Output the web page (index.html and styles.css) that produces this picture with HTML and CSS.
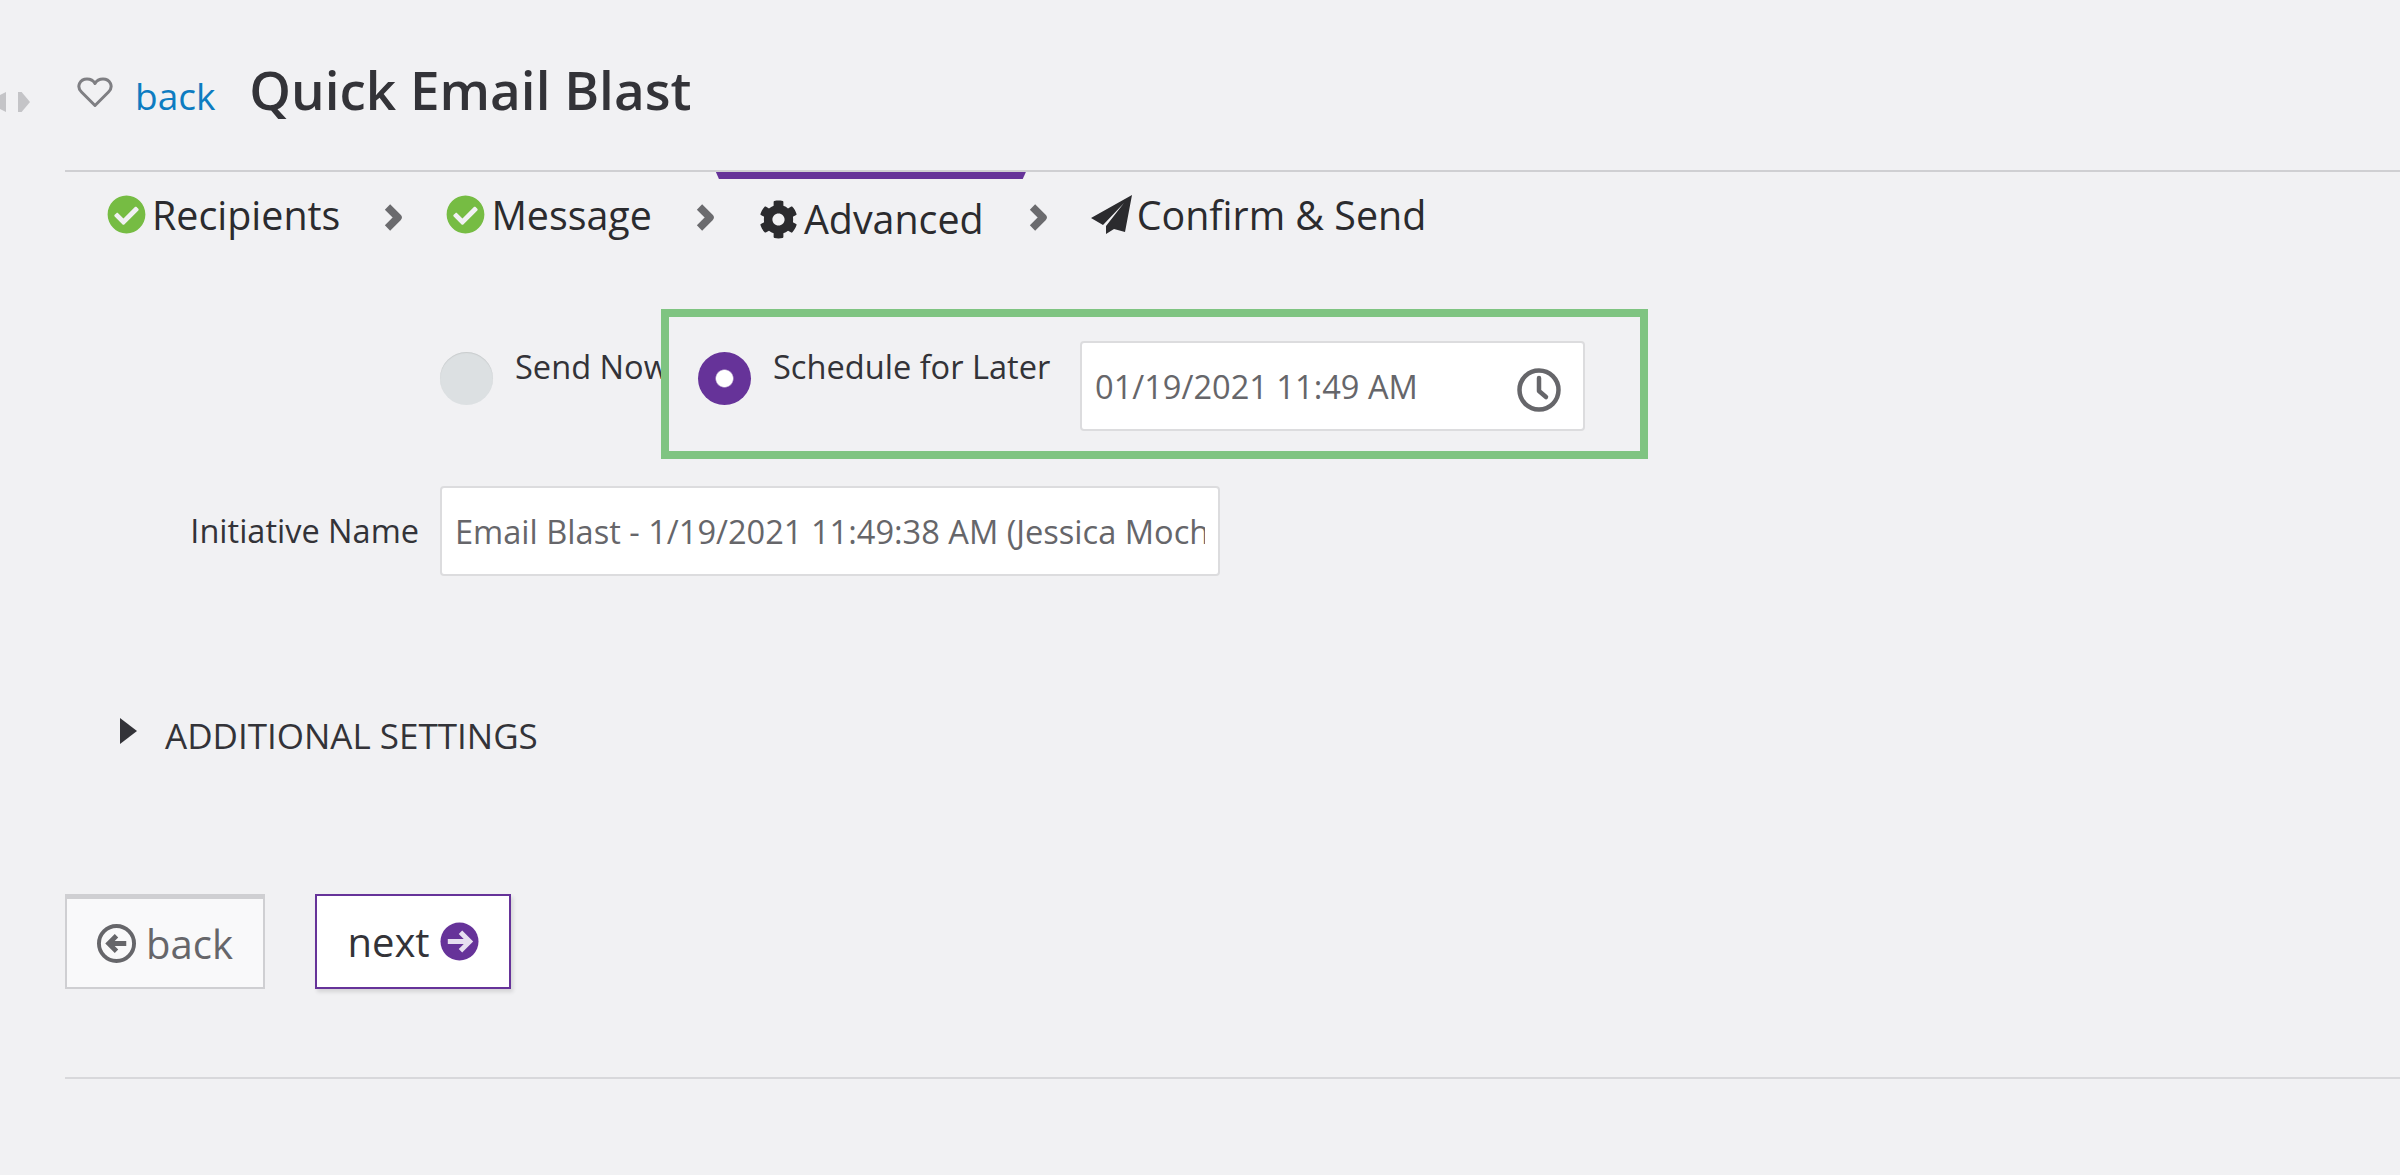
FILE: index.html
```html
<!DOCTYPE html>
<html lang="en">
<head>
<meta charset="utf-8">
<title>Quick Email Blast</title>
<link rel="stylesheet" href="styles.css">
</head>
<body>
<div class="collapse-handle" aria-hidden="true"><span class="tri tri-left"></span><span class="tri tri-right"></span></div>
<main class="page">
  <header class="head">
    <svg class="heart" viewBox="0 0 36 31"><path d="M18 28.500 4.500 15C-1 9.500 3 2 10 2c3.500 0 6.500 1.800 8 4.500C19.500 3.800 22.500 2 26 2c7 0 11 7.500 5.500 13Z"/></svg>
    <a class="back-link" href="#">back</a>
    <h1 class="title">Quick Email Blast</h1>
  </header>

  <nav class="steps">
    <div class="step step-first">
      <svg class="ico-check" viewBox="0 0 512 512"><path d="M504 256c0 136.967-111.033 248-248 248S8 392.967 8 256 119.033 8 256 8s248 111.033 248 248zM227.314 387.314l184-184c6.248-6.248 6.248-16.379 0-22.627l-22.627-22.627c-6.248-6.249-16.379-6.249-22.628 0L216 308.118l-70.059-70.059c-6.248-6.248-16.379-6.248-22.628 0l-22.627 22.627c-6.248 6.248-6.248 16.379 0 22.627l104 104c6.249 6.249 16.379 6.249 22.628.001z"/></svg>
      <span>Recipients</span>
    </div>
    <svg class="chev chev-1" viewBox="0 0 20 29"><path d="M4.500 4 15 14.500 4.500 25"/></svg>
    <div class="step">
      <svg class="ico-check" viewBox="0 0 512 512"><path d="M504 256c0 136.967-111.033 248-248 248S8 392.967 8 256 119.033 8 256 8s248 111.033 248 248zM227.314 387.314l184-184c6.248-6.248 6.248-16.379 0-22.627l-22.627-22.627c-6.248-6.249-16.379-6.249-22.628 0L216 308.118l-70.059-70.059c-6.248-6.248-16.379-6.248-22.628 0l-22.627 22.627c-6.248 6.248-6.248 16.379 0 22.627l104 104c6.249 6.249 16.379 6.249 22.628.001z"/></svg>
      <span>Message</span>
    </div>
    <svg class="chev chev-2" viewBox="0 0 20 29"><path d="M4.500 4 15 14.500 4.500 25"/></svg>
    <div class="step step-active">
      <svg class="ico-gear" viewBox="0 0 512 512"><path d="M487.4 315.7l-42.600-24.600c4.300-23.200 4.300-47 0-70.200l42.600-24.600c4.900-2.800 7.100-8.600 5.500-14-11.100-35.600-30-67.800-54.700-94.600-3.800-4.100-10-5.100-14.800-2.300L380.800 110c-17.900-15.400-38.500-27.300-60.800-35.100V25.800c0-5.600-3.900-10.500-9.400-11.700-36.700-8.200-74.300-7.800-109.200 0-5.500 1.200-9.400 6.100-9.400 11.700V75c-22.200 7.900-42.800 19.800-60.800 35.100L88.700 85.500c-4.900-2.800-11-1.900-14.800 2.300-24.700 26.700-43.600 58.900-54.700 94.600-1.700 5.400.6 11.200 5.500 14L67.300 221c-4.300 23.200-4.300 47 0 70.200l-42.600 24.600c-4.900 2.800-7.100 8.600-5.500 14 11.100 35.600 30 67.800 54.700 94.600 3.800 4.100 10 5.100 14.800 2.300l42.600-24.600c17.900 15.400 38.500 27.300 60.800 35.100v49.200c0 5.600 3.900 10.500 9.400 11.700 36.700 8.200 74.300 7.800 109.200 0 5.500-1.200 9.400-6.100 9.400-11.700v-49.200c22.200-7.900 42.800-19.800 60.800-35.100l42.600 24.600c4.900 2.800 11 1.900 14.800-2.300 24.700-26.700 43.600-58.900 54.700-94.600 1.500-5.500-.7-11.300-5.600-14.100zM256 336c-44.100 0-80-35.900-80-80s35.900-80 80-80 80 35.900 80 80-35.900 80-80 80z"/></svg>
      <span>Advanced</span>
    </div>
    <svg class="chev chev-3" viewBox="0 0 20 29"><path d="M4.500 4 15 14.500 4.500 25"/></svg>
    <div class="step step-send">
      <svg class="ico-plane" viewBox="0 0 41 39"><path d="M41 0 0 23 12 30 33 8 15 31 15 39 23 34 34 37Z"/></svg>
      <span>Confirm &amp; Send</span>
    </div>
  </nav>

  <form class="form">
    <div class="send-row">
      <span class="radio radio-off"></span>
      <span class="radio-label send-now">Send Now</span>
      <div class="highlight">
        <span class="radio radio-on"></span>
        <span class="radio-label schedule">Schedule for Later</span>
        <div class="field date-field">
          <input class="field-input" type="text" readonly value="01/19/2021 11:49 AM">
          <svg class="ico-clock" viewBox="0 0 44 44"><circle cx="22" cy="22" r="19.500"/><path d="M22 10v13l7 6"/></svg>
        </div>
      </div>
    </div>

    <div class="name-row">
      <label class="name-label" for="initiative">Initiative Name</label>
      <div class="field name-field">
        <input class="field-input" id="initiative" type="text" readonly value="Email Blast - 1/19/2021 11:49:38 AM (Jessica Mochan)">
      </div>
    </div>

    <div class="additional">
      <svg class="ico-tri" viewBox="0 0 17 28"><path d="M0 1 17 14 0 27Z"/></svg>
      <span>ADDITIONAL SETTINGS</span>
    </div>

    <div class="actions">
      <button type="button" class="btn btn-back">
        <svg class="ico-btn" viewBox="0 0 40 40"><circle class="ring" cx="20" cy="20" r="18"/><path class="arrow" d="M30 20H14M20 12l-8 8 8 8"/></svg>
        <span>back</span>
      </button>
      <button type="button" class="btn btn-next">
        <span>next</span>
        <svg class="ico-btn" viewBox="0 0 40 40"><circle class="disc" cx="20" cy="20" r="19.500"/><path class="arrow" d="M8 20h22M21 10.500l9.500 9.500-9.500 9.500"/></svg>
      </button>
    </div>
  </form>
  <div class="bottom-rule"></div>
</main>
</body>
</html>
```
FILE: styles.css
```css
* { box-sizing: border-box; }
html, body { margin: 0; height: 100%; }
body {
  background: #f1f1f3;
  color: #333338;
  font-family: "Open Sans", "Liberation Sans", sans-serif;
  overflow: hidden;
  position: relative;
}

.collapse-handle {
  position: absolute;
  left: 0;
  top: 92px;
  display: flex;
  gap: 12px;
}
.tri { display: block; height: 20px; background: #c4c4c7; }
.tri-left { width: 6px; clip-path: polygon(0 15%, 100% 0, 100% 100%, 0 85%); }
.tri-right { width: 12px; clip-path: polygon(0 0, 30% 0, 100% 50%, 30% 100%, 0 100%); }

.page { padding-left: 65px; }

.head {
  height: 172px;
  border-bottom: 2px solid #cfcfd2;
  display: flex;
  align-items: flex-start;
  padding-left: 12px;
}
.heart { width: 36px; height: 31px; margin-top: 77px; fill: none; stroke: #7f7f83; stroke-width: 3; stroke-linejoin: round; }
.back-link { color: #0d7cc1; font-size: 37px; line-height: 48px; margin: 72px 0 0 22px; text-decoration: none; }
.title { font-size: 53px; font-weight: 600; line-height: 70px; margin: 55px 0 0 34px; color: #333338; }

.steps {
  display: flex;
  align-items: flex-start;
  padding-left: 42px;
  height: 137px;
  color: #2b2b2e;
  font-size: 39.4px;
  line-height: 54px;
}
.step { display: flex; align-items: flex-start; padding-top: 16px; position: relative; }
.step span { margin-left: 6px; }
.step-send span { margin-left: 5px; }
.ico-check { width: 39px; height: 39px; margin-top: 7px; fill: #76bc43; }
.chev { width: 20px; height: 29px; margin-top: 31px; flex: none; fill: none; stroke: #6b6b6e; stroke-width: 7.500; stroke-linejoin: round; }
.chev-1 { margin-left: 43px; margin-right: 43px; }
.chev-2 { margin-left: 43px; margin-right: 44px; }
.chev-3 { margin-left: 44px; margin-right: 43px; }
.step-active { padding-top: 20px; }
.step-active::before {
  content: "";
  position: absolute;
  left: -43px;
  top: 0;
  width: 310px;
  height: 7px;
  background: #663399;
  clip-path: polygon(0 0, 100% 0, 99% 100%, 1% 100%);
}
.ico-gear { width: 39px; height: 39px; margin-top: 8px; fill: #2b2b2e; }
.ico-plane { width: 41px; height: 39px; margin-top: 7px; fill: #2b2b2e; }

.form { display: block; }
.send-row { display: flex; align-items: flex-start; padding-left: 375px; }
.radio { display: block; width: 53px; height: 53px; border-radius: 50%; flex: none; margin-top: 43px; }
.radio-off { background: #dce0e2; box-shadow: inset 0 1px 1px #c9cccd; }
.radio-on { background: radial-gradient(circle, #fff 0 8px, #663399 9.500px); margin-top: 35px; }
.radio-label { font-size: 32.600px; line-height: 46px; flex: none; white-space: nowrap; }
.send-now { width: 146px; margin: 35px 0 0 22px; }
.highlight {
  position: relative;
  width: 987px;
  height: 150px;
  border: 8px solid #7fc481;
  background: #f1f1f3;
  display: flex;
  align-items: flex-start;
  padding-left: 29px;
}
.schedule { margin: 27px 0 0 22px; width: 307px; }
.field {
  background: #fff;
  border: 2px solid #dcdcde;
  border-radius: 4px;
  display: flex;
  align-items: center;
}
.field-input {
  flex: 1;
  min-width: 0;
  height: 100%;
  padding: 0 13px;
  border: 0;
  outline: 0;
  background: transparent;
  color: #66666a;
  font: inherit;
  font-size: 32.600px;
}
.date-field { width: 505px; height: 90px; margin-top: 24px; padding-right: 22px; }
.ico-clock { width: 44px; height: 44px; margin-top: 7px; flex: none; fill: none; stroke: #66666a; stroke-width: 4.500; stroke-linecap: round; stroke-linejoin: round; }

.name-row { display: flex; align-items: flex-start; margin-top: 27px; }
.name-label { width: 354px; text-align: right; font-size: 32.500px; line-height: 46px; margin-top: 22px; flex: none; }
.name-field { width: 780px; height: 90px; margin-left: 21px; }

.additional { display: flex; align-items: flex-start; margin-top: 136px; padding-left: 55px; font-size: 35px; line-height: 46px; }
.ico-tri { width: 17px; height: 28px; margin-top: 5px; fill: #333338; }
.additional span { margin-left: 28px; margin-top: 1px; }

.actions { display: flex; gap: 50px; margin-top: 135px; }
.btn {
  height: 95px;
  font: inherit;
  font-size: 40px;
  display: flex;
  align-items: center;
  justify-content: center;
  gap: 10px;
  padding: 0;
}
.btn-back { width: 200px; background: #f9f9fa; color: #66666a; border: 2px solid #cfcfd2; border-top-width: 5px; }
.btn-next { width: 196px; background: #fff; color: #333338; border: 2px solid #663399; box-shadow: 2px 3px 4px rgba(0,0,0,.12); }
.ico-btn { width: 39px; height: 39px; flex: none; fill: none; }
.ring { stroke: #66666a; stroke-width: 4; }
.btn-back .arrow { stroke: #66666a; stroke-width: 5; }
.disc { fill: #663399; }
.btn-next .arrow { stroke: #e6dff0; stroke-width: 5; }

.bottom-rule { height: 2px; background: #d8d8db; margin-top: 88px; }
```
